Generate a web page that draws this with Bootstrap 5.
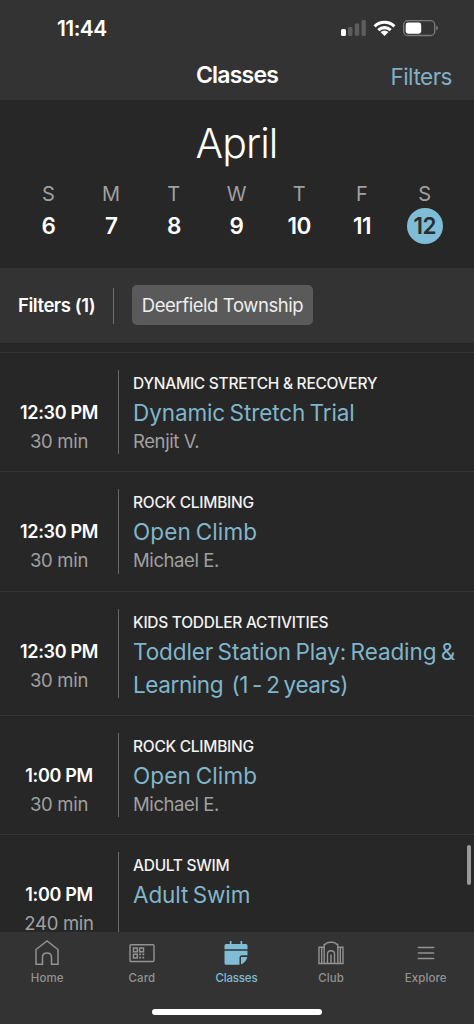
<!DOCTYPE html>
<html lang="en">
<head>
<meta charset="utf-8">
<meta name="viewport" content="width=device-width, initial-scale=1">
<title>Classes</title>
<link href="https://cdn.jsdelivr.net/npm/bootstrap@5.3.0/dist/css/bootstrap.min.css" rel="stylesheet">
<style>
body{background:#272727;color:#fff;font-family:Inter,"Liberation Sans",sans-serif;height:1024px;overflow:hidden}
.bar-bg{background:#333}
.status{height:56px;padding:0 35px 0 57px}
.clock{font-size:21px;font-weight:600;line-height:24px;letter-spacing:-.55px;padding-top:1px}
.titlebar{height:44px;padding:0 22px;display:grid;grid-template-columns:1fr auto 1fr}
.page-title{font-size:23px;font-weight:600;line-height:28px;letter-spacing:-.8px;margin-top:5px}
.filter-link{font-size:22.5px;line-height:28px;letter-spacing:-.5px;color:#80b0c6;margin-top:7px}
.sky{color:#80b6cb}
.calendar{height:168px;padding:22px 18px 0 17px}
.month{font-size:41px;font-weight:300;line-height:42px;letter-spacing:-.9px}
.week{margin-top:20px;display:grid;grid-template-columns:repeat(7,1fr)}
.dow{font-size:20px;line-height:20px;color:#a0a0a0;font-weight:400}
.num{font-size:22.5px;font-weight:600;line-height:36px;height:36px;width:36px;letter-spacing:-.6px;margin-top:4px}
.num.today{background:#7fbcd6;color:#272e32}
.filterbar{height:75px;padding:0 18px}
.f-label{font-size:18.5px;font-weight:600;letter-spacing:-.45px;width:95px}
.f-rule{width:1px;height:36px;background:#707070}
.chip{margin-left:18px;width:181px;height:40px;border-radius:5px;background:#5a5a5a;color:#eee;font-size:18.5px;letter-spacing:-.42px;padding-top:1px;margin-top:-1px}
.classes{height:589px;padding-top:9px}
.slot{border-top:1px solid #363636;height:119.4px;padding:17px 0}
.slot.tall{height:124px}
.when{width:118px;padding-top:28px;line-height:29px}
.time{font-size:18px;font-weight:600;letter-spacing:-.35px}
.dur{font-size:18.5px;color:#a0a0a0;letter-spacing:-.3px}
.info{border-left:1px solid #686868;padding-left:14px;white-space:pre}
.cat{font-size:15.5px;font-weight:500;line-height:26px;letter-spacing:-.27px;color:#f2f2f2;padding-top:1px}
.name{font-size:22.5px;line-height:33px;letter-spacing:-.1px;word-spacing:-1.800px;margin-top:-1px}
.name.wider{letter-spacing:.15px}
.tight{letter-spacing:-.4px}
.coach{font-size:18.5px;line-height:25px;color:#a0a0a0;letter-spacing:-.4px}
.thumb{right:3px;top:845px;width:4px;height:40px;background:#999;border-radius:2px}
.tabs{height:92px;padding:8px 0 0}
.tab{width:94.6px;font-size:11.5px;font-weight:500;line-height:14px;letter-spacing:.1px;color:#929292}
.tab svg{height:26px;width:28px;margin-bottom:5px}
.tab.on{color:#7fbcd6;letter-spacing:-.2px}
.home-ind{width:170px;height:6px;border-radius:3px;background:#fff;margin:24px auto 0}
</style>
</head>
<body>
<header class="bar-bg">
  <div class="status d-flex align-items-center justify-content-between">
    <span class="clock">11:44</span>
    <svg width="98" height="18" viewBox="341 19 98 18">
      <rect x="341" y="29" width="5" height="7" rx="1.5" fill="#fff"/>
      <g fill="#5c5c5c"><rect x="348" y="27" width="4.4" height="9" rx="1.4"/><rect x="354.8" y="23.5" width="4.4" height="12.500" rx="1.400"/><rect x="361.500" y="20" width="4.400" height="16" rx="1.400"/></g>
      <g fill="none" stroke="#fff" stroke-width="3.100"><path d="M374.600 26.300A14.200 14.200 0 0 1 394.400 26.300"/><path d="M378.300 30.100A9 9 0 0 1 390.700 30.100"/></g>
      <path d="M380.500 32.100Q384.500 28.900 388.500 32.100L384.500 36Z" fill="#fff"/>
      <rect x="403.700" y="20.700" width="31" height="14.800" rx="4" fill="none" stroke="#7b7b7b" stroke-width="1.300"/>
      <rect x="405.700" y="22.500" width="15.500" height="11.200" rx="2.400" fill="#fff"/>
      <path d="M436.200 25.500Q438 26.500 438 28T436.200 30.600Z" fill="#7b7b7b"/>
    </svg>
  </div>
  <div class="titlebar">
    <span></span><span class="page-title">Classes</span><a class="filter-link text-end text-decoration-none">Filters</a>
  </div>
</header>
<section class="calendar text-center">
  <div class="month">April</div>
  <div class="week">
    <div class="d-flex flex-column align-items-center"><span class="dow">S</span><span class="num">6</span></div>
    <div class="d-flex flex-column align-items-center"><span class="dow">M</span><span class="num">7</span></div>
    <div class="d-flex flex-column align-items-center"><span class="dow">T</span><span class="num">8</span></div>
    <div class="d-flex flex-column align-items-center"><span class="dow">W</span><span class="num">9</span></div>
    <div class="d-flex flex-column align-items-center"><span class="dow">T</span><span class="num">10</span></div>
    <div class="d-flex flex-column align-items-center"><span class="dow">F</span><span class="num">11</span></div>
    <div class="d-flex flex-column align-items-center"><span class="dow">S</span><span class="num today rounded-circle">12</span></div>
  </div>
</section>
<section class="filterbar bar-bg d-flex align-items-center">
  <span class="f-label text-nowrap">Filters (1)</span><span class="f-rule"></span>
  <span class="chip d-flex align-items-center justify-content-center text-nowrap">Deerfield Township</span>
</section>
<main class="classes overflow-hidden">
  <article class="slot d-flex"><div class="when text-center"><div class="time">12:30 PM</div><div class="dur">30 min</div></div><div class="info"><div class="cat">DYNAMIC STRETCH &amp; RECOVERY</div><div class="name sky">Dynamic Stretch Trial</div><div class="coach">Renjit V.</div></div></article>
  <article class="slot d-flex"><div class="when text-center"><div class="time">12:30 PM</div><div class="dur">30 min</div></div><div class="info"><div class="cat">ROCK CLIMBING</div><div class="name wider sky">Open Climb</div><div class="coach">Michael E.</div></div></article>
  <article class="slot tall d-flex"><div class="when text-center"><div class="time">12:30 PM</div><div class="dur">30 min</div></div><div class="info"><div class="cat">KIDS TODDLER ACTIVITIES</div><div class="name sky">Toddler Station Play: Reading &amp;
<span class="tight">Learning  (1 - 2 years)</span></div></div></article>
  <article class="slot d-flex"><div class="when text-center"><div class="time">1:00 PM</div><div class="dur">30 min</div></div><div class="info"><div class="cat">ROCK CLIMBING</div><div class="name wider sky">Open Climb</div><div class="coach">Michael E.</div></div></article>
  <article class="slot d-flex"><div class="when text-center"><div class="time">1:00 PM</div><div class="dur">240 min</div></div><div class="info"><div class="cat">ADULT SWIM</div><div class="name sky">Adult Swim</div></div></article>
</main>
<div class="thumb position-absolute"></div>
<footer class="tabs bar-bg">
  <nav class="d-flex text-center">
    <div class="tab d-flex flex-column align-items-center"><svg viewBox="0 0 28 26" fill="none" stroke="currentColor" stroke-width="1.500"><path d="M3 24.200V9.500L14 1L25 9.500V24.200H18.500V17.500Q18.500 13 14 13T9.500 17.500V24.200Z"/></svg>Home</div>
    <div class="tab d-flex flex-column align-items-center"><svg viewBox="0 0 28 26" fill="none" stroke="currentColor" stroke-width="1.400"><rect x="2" y="4.700" width="24" height="16.800" rx="1"/><g stroke-width="1.500"><rect x="5.500" y="8" width="3.800" height="3.800"/><rect x="11.700" y="8" width="3.800" height="3.800"/><rect x="5.500" y="14.200" width="3.800" height="3.800"/></g><path d="M11.100 14.400h1.900m1.300 0h1.900m-5.100 3.200h1.900m1.300 0h1.900" stroke-width="1.900"/></svg>Card</div>
    <div class="tab on d-flex flex-column align-items-center"><svg viewBox="0 0 28 26" fill="currentColor"><path d="M7.800 1h1.700v3h9V1h1.700v3H24q1.500 0 1.500 1.500V9.300H2.500V5.500Q2.500 4 4 4h3.800ZM2.500 10.800h23v4.500h-5.500q-2.500 0-2.500 2.500v7H4q-1.500 0-1.500-1.500ZM19 17h6.300q-.8 5-6.300 7.500Z"/></svg>Classes</div>
    <div class="tab d-flex flex-column align-items-center"><svg viewBox="0 0 28 26" fill="none" stroke="currentColor" stroke-width="1.400"><path d="M7.200 23.500V4.500Q9 4.300 9.300 3.300Q10.700 2.300 14 2.300T18.700 3.300Q19 4.300 20.800 4.500V23.500M7.200 7.200H2V23.500H26V7.200H20.800M4.700 7.200V23.500M23.300 7.200V23.500M10.500 23.500V14Q10.500 10.800 14 10.800T17.500 14V23.500M14 14.500V23.500"/></svg>Club</div>
    <div class="tab d-flex flex-column align-items-center"><svg viewBox="0 0 28 26" stroke="currentColor" stroke-width="1.500" stroke-linecap="round"><path d="M6.300 7.500h15.400M6.300 13h15.400M6.300 18.500h15.400"/></svg>Explore</div>
  </nav>
  <div class="home-ind"></div>
</footer>
<script src="https://cdn.jsdelivr.net/npm/bootstrap@5.3.0/dist/js/bootstrap.bundle.min.js"></script>
</body>
</html>
